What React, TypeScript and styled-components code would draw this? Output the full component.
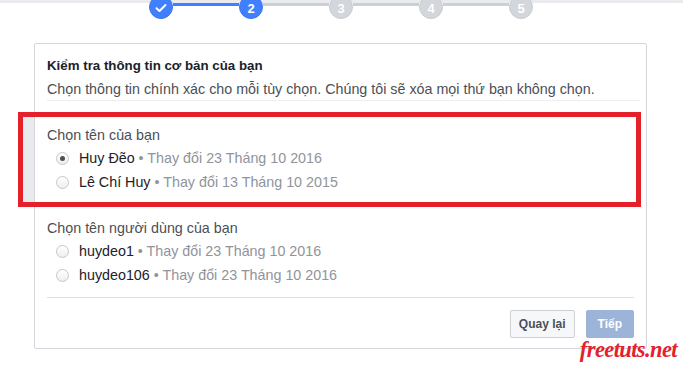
import styled, { createGlobalStyle } from "styled-components";

const GlobalStyle = createGlobalStyle`
  html, body {
    margin: 0;
    padding: 0;
    background: #fff;
    overflow: hidden;
  }
  body {
    font-family: "Liberation Sans", Arial, Helvetica, sans-serif;
    color: #1d2129;
  }
`;

const Page = styled.div`
  position: relative;
  width: 683px;
  height: 369px;
  overflow: hidden;
`;

const StepperBar = styled.div`
  display: flex;
  align-items: flex-start;
  margin-top: -5px;
  padding-left: 149px;
  background: linear-gradient(#e9ebee 0 8px, transparent 8px);
`;

const StepDot = styled.div<{ $active?: boolean }>`
  flex: 0 0 24px;
  width: 24px;
  height: 24px;
  border-radius: 50%;
  box-sizing: border-box;
  display: flex;
  align-items: center;
  justify-content: center;
  font-size: 13px;
  font-weight: bold;
  color: #fff;
  background: ${({ $active }) => ($active ? "#4080ff" : "#d3d6db")};
  border: 1px solid ${({ $active }) => ($active ? "#3a76ea" : "#c8ccd1")};
  padding-top: 2px;
`;

const Connector = styled.div<{ $done?: boolean }>`
  flex: 0 0 66px;
  height: 3px;
  margin-top: 8px;
  background: ${({ $done }) => ($done ? "#4080ff" : "#ccd0d5")};
`;

const Card = styled.div`
  box-sizing: border-box;
  width: 613px;
  height: 306px;
  margin: 24px 0 0 34px;
  border: 1px solid #d3d6db;
  border-radius: 2px;
  padding: 13px 12px 10px;
  display: flex;
  flex-direction: column;
`;

const Header = styled.div`
  padding-bottom: 2px;
  border-bottom: 1px solid #eceef1;
  margin-right: -6px;
`;

const Title = styled.div`
  font-size: 13.3px;
  font-weight: bold;
  line-height: 17px;
  color: #1d2129;
`;

const Subtitle = styled.div`
  margin-top: 6px;
  font-size: 14.3px;
  line-height: 18px;
  color: #4b4f56;
`;

const Section = styled.div`
  margin-top: 25px;
  display: flex;
  flex-direction: column;
`;

const SectionLabel = styled.div`
  font-size: 14.3px;
  line-height: 18px;
  color: #4b4f56;
  margin-bottom: 2px;
`;

const OptionRow = styled.label`
  display: flex;
  align-items: center;
  height: 24px;
  padding-left: 9px;
  gap: 10px;
  font-size: 14.3px;
`;

const Radio = styled.span<{ $checked?: boolean }>`
  box-sizing: border-box;
  width: 13px;
  height: 13px;
  border-radius: 50%;
  border: 1px solid #c4c7cc;
  background: linear-gradient(#ffffff, #eceef1);
  display: flex;
  align-items: center;
  justify-content: center;

  &::after {
    content: "";
    width: 5px;
    height: 5px;
    border-radius: 50%;
    background: ${({ $checked }) => ($checked ? "#4b4f56" : "transparent")};
  }
`;

const Name = styled.span`
  color: #1d2129;
`;

const Meta = styled.span`
  color: #90949c;
`;

const Footer = styled.div`
  margin-top: auto;
  border-top: 1px solid #dddfe2;
  padding-top: 12px;
  display: flex;
  justify-content: flex-end;
  gap: 11px;
`;

const Button = styled.button<{ $primary?: boolean }>`
  box-sizing: border-box;
  height: 28px;
  padding: 0 ${({ $primary }) => ($primary ? "11px" : "8px")};
  border-radius: 2px;
  font-family: inherit;
  font-size: 12px;
  font-weight: bold;
  cursor: pointer;
  color: ${({ $primary }) => ($primary ? "#fff" : "#4b4f56")};
  background: ${({ $primary }) => ($primary ? "#9cb4d8" : "#f6f7f9")};
  border: 1px solid ${({ $primary }) => ($primary ? "#9cb4d8" : "#ced0d4")};
`;

const Highlight = styled.div`
  position: absolute;
  left: 18px;
  top: 112px;
  width: 623px;
  height: 95px;
  box-sizing: border-box;
  border: 5px solid #e4202b;
  background: linear-gradient(to right, #e9eaed 0 11px, transparent 11px);
  pointer-events: none;
`;

const Watermark = styled.div`
  position: absolute;
  right: 6px;
  bottom: 6px;
  font-family: "Liberation Serif", "Times New Roman", serif;
  font-style: italic;
  font-weight: bold;
  font-size: 22.5px;
  letter-spacing: -0.6px;
  color: #e3222d;
`;

const Check = () => (
  <svg width="12" height="10" viewBox="0 0 12 10">
    <path d="M1.5 5.2 L4.5 8 L10.5 2" fill="none" stroke="#fff" strokeWidth="2" strokeLinecap="round" strokeLinejoin="round" />
  </svg>
);

const nameOptions = [
  { name: "Huy Đẽo", date: "23 Tháng 10 2016", checked: true },
  { name: "Lê Chí Huy", date: "13 Tháng 10 2015" },
];

const userOptions = [
  { name: "huydeo1", date: "23 Tháng 10 2016" },
  { name: "huydeo106", date: "23 Tháng 10 2016" },
];

const App = () => {
  return (
    <Page>
      <GlobalStyle />
      <StepperBar>
        <StepDot $active>
          <Check />
        </StepDot>
        <Connector $done />
        <StepDot $active>2</StepDot>
        <Connector />
        <StepDot>3</StepDot>
        <Connector />
        <StepDot>4</StepDot>
        <Connector />
        <StepDot>5</StepDot>
      </StepperBar>

      <Card>
        <Header>
          <Title>Kiểm tra thông tin cơ bản của bạn</Title>
          <Subtitle>
            Chọn thông tin chính xác cho mỗi tùy chọn. Chúng tôi sẽ xóa mọi thứ bạn không chọn.
          </Subtitle>
        </Header>

        <Section>
          <SectionLabel>Chọn tên của bạn</SectionLabel>
          {nameOptions.map((o) => (
            <OptionRow key={o.name}>
              <Radio $checked={o.checked} />
              <span>
                <Name>{o.name}</Name>
                <Meta> • Thay đổi {o.date}</Meta>
              </span>
            </OptionRow>
          ))}
        </Section>

        <Section>
          <SectionLabel>Chọn tên người dùng của bạn</SectionLabel>
          {userOptions.map((o) => (
            <OptionRow key={o.name}>
              <Radio />
              <span>
                <Name>{o.name}</Name>
                <Meta> • Thay đổi {o.date}</Meta>
              </span>
            </OptionRow>
          ))}
        </Section>

        <Footer>
          <Button>Quay lại</Button>
          <Button $primary>Tiếp</Button>
        </Footer>
      </Card>

      <Highlight />
      <Watermark>freetuts.net</Watermark>
    </Page>
  );
};

export default App;
